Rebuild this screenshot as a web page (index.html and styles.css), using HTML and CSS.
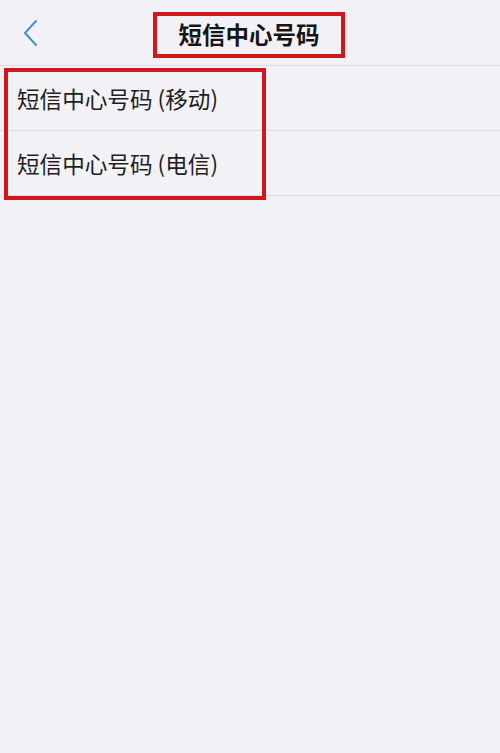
FILE: index.html
```html
<!DOCTYPE html>
<html lang="zh-CN">
<head>
<meta charset="utf-8">
<title>短信中心号码</title>
<link rel="stylesheet" href="styles.css">
</head>
<body>
<header class="topbar">
  <div class="back">
    <svg width="16" height="30" viewBox="0 0 16 30" class="chev"><polyline points="13,2 2,14 13,26" fill="none" stroke="#3f95c9" stroke-width="2" stroke-linecap="round" stroke-linejoin="round"/></svg>
  </div>
  <h1 class="title">短信中心号码</h1>
  <div class="spacer"></div>
</header>
<main class="list">
  <div class="row">短信中心号码 (移动)</div>
  <div class="row">短信中心号码 (电信)</div>
  <div class="mark"></div>
</main>
</body>
</html>
```
FILE: styles.css
```css
html, body {
  margin: 0;
  padding: 0;
  background: #f2f1f5;
  font-family: "Noto Sans CJK SC", "Noto Sans", sans-serif;
  color: #1e1e1e;
}
body {
  min-height: 100vh;
}
.topbar {
  height: 65px;
  border-bottom: 1px solid #dcdbe0;
  display: grid;
  grid-template-columns: 1fr auto 1fr;
  align-items: center;
}
.back {
  padding-left: 23px;
  padding-top: 2px;
  display: flex;
  align-items: center;
}
.chev { display: block; }
.title {
  margin: 0;
  box-sizing: border-box;
  width: 192px;
  height: 46px;
  margin-top: 5px;
  margin-left: -2px;
  border: 4px solid #d0171c;
  font-size: 23.5px;
  font-weight: 600;
  line-height: 36px;
  text-align: center;
  color: #151515;
}
.list {
  position: relative;
  padding-bottom: 8px;
}
.row {
  height: 64px;
  border-bottom: 1px solid #dcdbe0;
  padding-left: 17px;
  display: flex;
  align-items: center;
  font-size: 22.6px;
}
.mark {
  position: absolute;
  left: 4px;
  top: 2px;
  width: 262px;
  height: 132px;
  box-sizing: border-box;
  border: 4px solid #d0171c;
  pointer-events: none;
}
```
